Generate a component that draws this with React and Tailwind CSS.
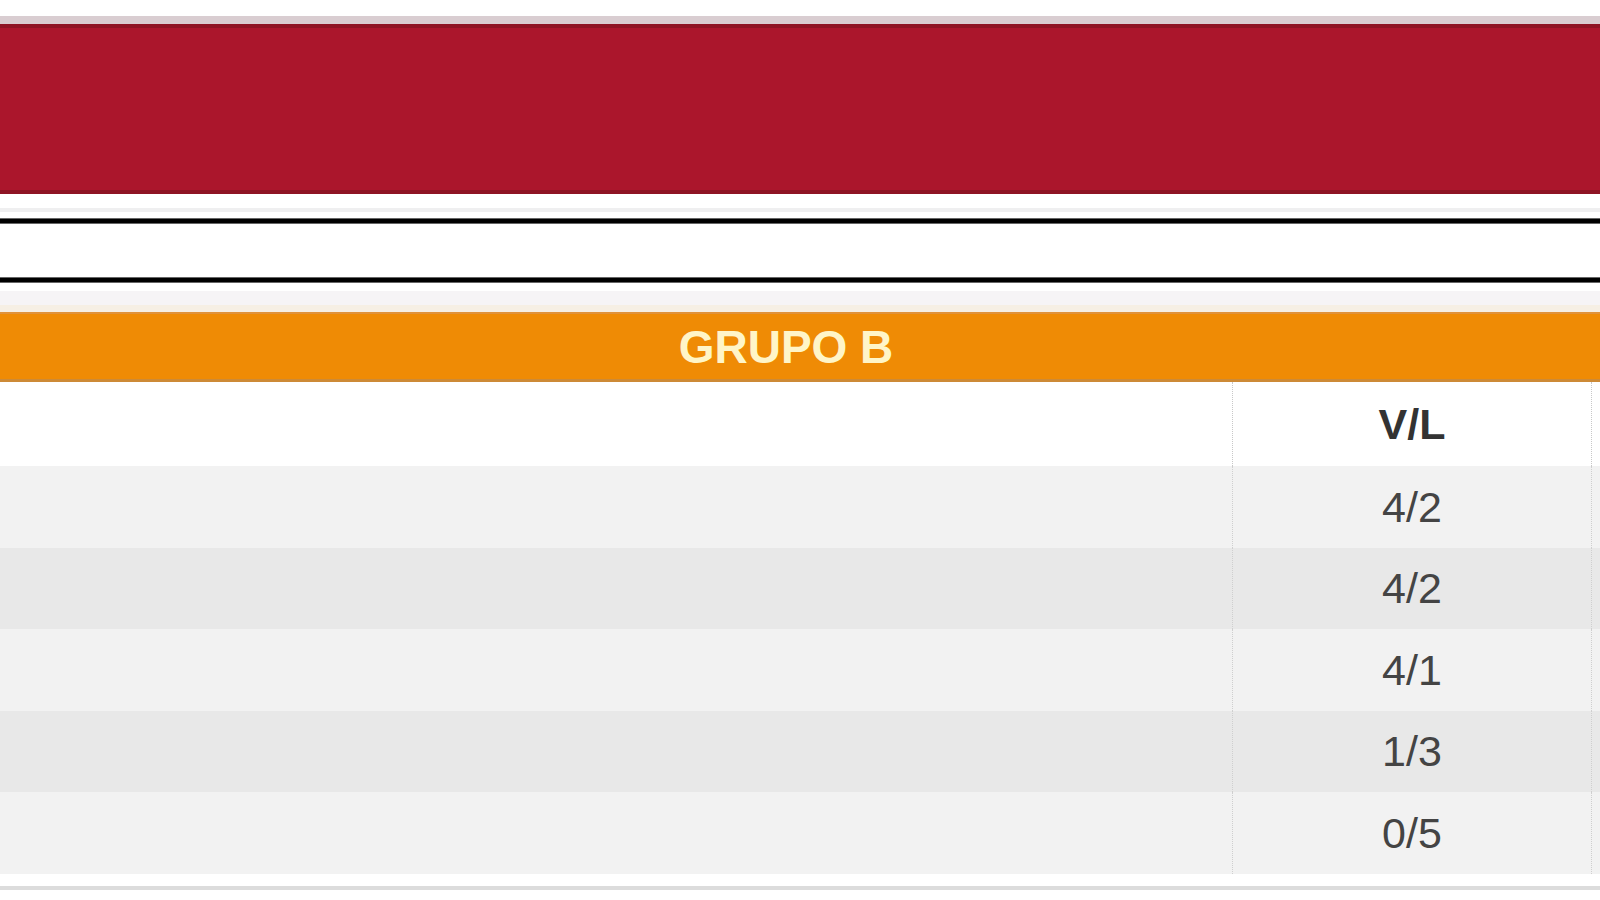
import React from 'react';

const rows = [
  { vl: '4/2', bg: 'bg-[#f2f2f2]', h: 'h-[82px]' },
  { vl: '4/2', bg: 'bg-[#e8e8e8]', h: 'h-[81px]' },
  { vl: '4/1', bg: 'bg-[#f2f2f2]', h: 'h-[82px]' },
  { vl: '1/3', bg: 'bg-[#e8e8e8]', h: 'h-[81px]' },
  { vl: '0/5', bg: 'bg-[#f2f2f2]', h: 'h-[82px]' },
];

const App = () => {
  return (
    <div className="w-[1600px] h-[900px] overflow-hidden bg-white font-['Liberation_Sans',Arial,sans-serif]">
      {/* Banner */}
      <div className="h-[16px] bg-white" />
      <div className="h-[8px] bg-[#d9cdd1]" />
      <div className="h-[170px] bg-[#ab162c] border-y-[4px] border-[#8e1424]" />

      {/* Divider lines */}
      <div className="h-[14px] bg-white" />
      <div className="h-[4px] bg-[#efeff0]" />
      <div className="h-[6px] bg-white" />
      <div className="h-[6px] bg-black border-y border-[#666]" />
      <div className="h-[53px] bg-white" />
      <div className="h-[6px] bg-black border-y border-[#666]" />
      <div className="h-[8px] bg-white" />
      <div className="h-[14px] bg-[#f6f4f6]" />
      <div className="h-[7px] bg-[#f6efe4]" />

      {/* Group table */}
      <div className="h-[70px] bg-[#ef8b05] border-t-[2px] border-b-[3px] border-t-[#e0923a] border-b-[#cd8a36] flex items-center justify-center pr-[28px]">
        <span className="text-[46px] font-bold text-[#fff5c8] leading-none">GRUPO B</span>
      </div>

      <div className="grid grid-cols-[1232px_360px_1fr]">
        <div className="h-[84px] bg-white" />
        <div className="h-[84px] bg-white border-x border-dotted border-[#c8c8c8] flex items-center justify-center">
          <span className="text-[43px] font-bold text-[#333] leading-none">V/L</span>
        </div>
        <div className="h-[84px] bg-white" />

        {rows.map((row, i) => (
          <React.Fragment key={i}>
            <div className={`${row.h} ${row.bg}`} />
            <div className={`${row.h} ${row.bg} border-x border-dotted border-[#cfcfcf] flex items-center justify-center`}>
              <span className="text-[43px] text-[#444] leading-none">{row.vl}</span>
            </div>
            <div className={`${row.h} ${row.bg}`} />
          </React.Fragment>
        ))}
      </div>

      <div className="h-[12px] bg-white" />
      <div className="h-[4px] bg-[#dcdcdc]" />
    </div>
  );
};

export default App;
